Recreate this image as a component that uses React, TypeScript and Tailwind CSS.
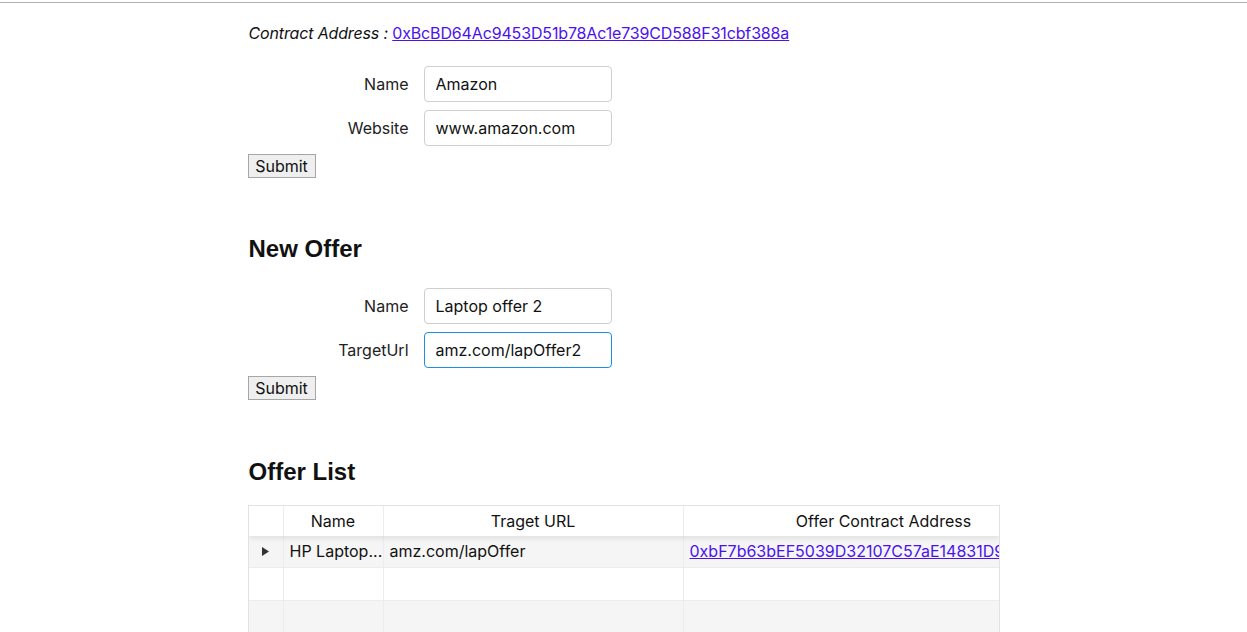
import React from "react";

const offers = [
  { name: "HP Laptop...", url: "amz.com/lapOffer", address: "0xbF7b63bEF5039D32107C57aE14831D92aB4fC0a1" },
];

function Field({ label, value, focused }: { label: string; value: string; focused?: boolean }) {
  return (
    <div className="flex items-center">
      <label className="w-[161px] text-right text-[16px] text-[#222]">{label}</label>
      <input
        readOnly
        value={value}
        className={`ml-[15px] w-[188px] h-[36px] rounded-[4px] border px-[11px] text-[16px] text-[#111] bg-white outline-none ${
          focused ? "border-[#1a8fe3]" : "border-[#cfcfcf]"
        }`}
      />
    </div>
  );
}

function SubmitButton() {
  return (
    <button className="h-[24px] w-[68px] border border-[#a6a6a6] bg-[#efefef] text-[16px] text-[#111] leading-none">
      Submit
    </button>
  );
}

export default function App() {
  return (
    <div className="min-h-screen bg-white font-['Inter','Liberation_Sans',Arial,sans-serif] text-[#111]">
      <div className="h-[2px]" />
      <div className="h-px bg-[#b4b4b4]" />

      <div className="w-[752px] mx-auto">
        {/* contract */}
        <p className="pl-px pt-[21px] text-[16px] leading-[19px] italic text-[#111] tracking-[-0.15px]">
          Contract Address :{" "}
          <a href="#" className="not-italic underline text-[#4a12ee]">
            0xBcBD64Ac9453D51b78Ac1e739CD588F31cbf388a
          </a>
        </p>

        <div className="mt-[23px] flex flex-col gap-[8px]">
          <Field label="Name" value="Amazon" />
          <Field label="Website" value="www.amazon.com" />
        </div>
        <div className="mt-[8px]">
          <SubmitButton />
        </div>

        {/* new offer */}
        <h3 className="pl-px mt-[57px] text-[24px] font-bold leading-[28px] font-['Liberation_Sans',Arial,sans-serif]">New Offer</h3>
        <div className="mt-[25px] flex flex-col gap-[8px]">
          <Field label="Name" value="Laptop offer 2" />
          <Field label="TargetUrl" value="amz.com/lapOffer2" focused />
        </div>
        <div className="mt-[8px]">
          <SubmitButton />
        </div>

        {/* offer list */}
        <h3 className="pl-px mt-[58px] text-[24px] font-bold leading-[28px] font-['Liberation_Sans',Arial,sans-serif]">Offer List</h3>
        <div className="mt-[19px] border border-[#e2e2e2] border-b-0 overflow-hidden">
          <div className="flex h-[30px] items-center bg-white shadow-[0_3px_5px_rgba(0,0,0,0.08)] relative z-10 text-[16px]">
            <div className="w-[35px] shrink-0 h-full border-r border-[#ececec]" />
            <div className="w-[100px] shrink-0 h-full border-r border-[#ececec] flex items-center justify-center pb-px">Name</div>
            <div className="w-[300px] shrink-0 h-full border-r border-[#ececec] flex items-center justify-center pb-px">Traget URL</div>
            <div className="w-[400px] shrink-0 h-full flex items-center justify-center pb-px">Offer Contract Address</div>
          </div>
          {offers.map((o) => (
            <div key={o.address} className="flex h-[31px] items-center bg-[#f5f5f5] text-[16px]">
              <div className="w-[35px] shrink-0 h-full border-r border-[#ececec] flex items-center justify-center">
                <svg width="7" height="9" viewBox="0 0 7 9" className="-mt-px">
                  <path d="M0 0 L7 4.5 L0 9 Z" fill="#333" />
                </svg>
              </div>
              <div className="w-[100px] shrink-0 h-full border-r border-[#ececec] flex items-center px-[6px] pb-[2px] overflow-hidden whitespace-nowrap">
                {o.name}
              </div>
              <div className="w-[300px] shrink-0 h-full border-r border-[#ececec] flex items-center px-[6px] pb-[2px]">{o.url}</div>
              <div className="w-[400px] shrink-0 h-full flex items-center px-[6px] pb-[2px] whitespace-nowrap">
                <a href="#" className="underline text-[#4a12ee]">{o.address}</a>
              </div>
            </div>
          ))}
          {["bg-white", "bg-[#f5f5f5]"].map((bg, i) => (
            <div key={i} className={`flex h-[33px] ${bg} border-t border-[#ececec]`}>
              <div className="w-[35px] shrink-0 h-full border-r border-[#ececec]" />
              <div className="w-[100px] shrink-0 h-full border-r border-[#ececec]" />
              <div className="w-[300px] shrink-0 h-full border-r border-[#ececec]" />
              <div className="w-[400px] shrink-0 h-full" />
            </div>
          ))}
        </div>
      </div>
    </div>
  );
}
